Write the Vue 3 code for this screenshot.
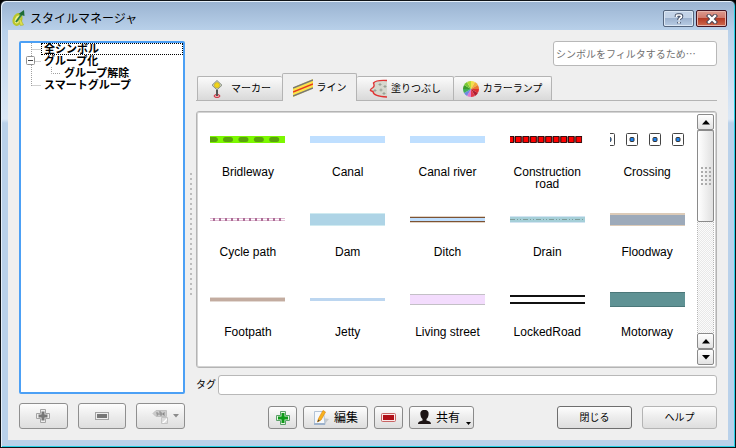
<script setup>
import { ref } from 'vue'

const filter = ref('')
const tag = ref('')
const activeTab = ref('line')

const tabs = [
  { id: 'marker', label: 'マーカー' },
  { id: 'line', label: 'ライン' },
  { id: 'fill', label: '塗りつぶし' },
  { id: 'ramp', label: 'カラーランプ' },
]

const symbols = [
  { name: 'Bridleway', bars: [{ y: 21, h: 7, fill: '#7cf800' }], kind: 'bridle' },
  { name: 'Canal', bars: [{ y: 21, h: 7, fill: '#bfdfff' }] },
  { name: 'Canal river', bars: [{ y: 21, h: 7, fill: '#bfdfff' }] },
  { name: 'Construction road', bars: [], kind: 'construction' },
  { name: 'Crossing', bars: [], kind: 'crossing' },
  { name: 'Cycle path', bars: [{ y: 23, h: 3, fill: '#e0bdd4' }, { y: 24, h: 1, fill: '#fff' }], kind: 'cycle' },
  { name: 'Dam', bars: [{ y: 18, h: 13, fill: '#cfeaf0' }, { y: 19, h: 11, fill: '#aed4e6' }] },
  { name: 'Ditch', bars: [{ y: 21, h: 7, fill: '#e3d3c4' }, { y: 22, h: 5, fill: '#7b5335' }, { y: 23, h: 3, fill: '#bfdfff' }] },
  { name: 'Drain', bars: [{ y: 21, h: 7, fill: '#d3e4f2' }, { y: 22, h: 5, fill: '#a5cfd8' }], kind: 'drain' },
  { name: 'Floodway', bars: [{ y: 18, h: 13, fill: '#dccbb8' }, { y: 20, h: 10, fill: '#9daaba' }] },
  { name: 'Footpath', bars: [{ y: 22, h: 5, fill: '#e4dad4' }, { y: 23, h: 3, fill: '#c3aca0' }] },
  { name: 'Jetty', bars: [{ y: 23, h: 3, fill: '#bcd6f0' }] },
  { name: 'Living street', bars: [{ y: 19, h: 11, fill: '#c3c0c6' }, { y: 20, h: 9, fill: '#f3dcfd' }] },
  { name: 'LockedRoad', bars: [{ y: 20, h: 9, fill: '#111' }, { y: 22, h: 5, fill: '#fff' }] },
  { name: 'Motorway', bars: [{ y: 17, h: 15, fill: '#4b7779' }, { y: 18, h: 13, fill: '#5f9294' }] },
]

const wheel = ['#f3e04a', '#f2b03a', '#e87830', '#e03030', '#b01c30', '#e03a4a', '#e07ad0', '#6f8be0', '#3fae5a', '#3c9c2c', '#78c832', '#b6d838']
const slices = wheel.map((fill, i) => {
  const p = (a) => `${(8 + 8 * Math.sin(a)).toFixed(2)} ${(8 - 8 * Math.cos(a)).toFixed(2)}`
  const s = Math.PI / 6
  return { fill, d: `M8 8L${p(i * s)}A8 8 0 0 1 ${p((i + 1) * s)}Z` }
})
</script>

<template>
  <div class="window">
    <header class="titlebar">
      <svg width="16" height="18" viewBox="0 0 16 18" aria-hidden="true">
        <ellipse cx="6.500" cy="10.500" rx="3.600" ry="5.400" transform="rotate(22 6.500 10.500)" fill="#eef08a" stroke="#b9c62a" stroke-width="2.400" />
        <path d="M7.500 11l2-1 3 6-3 .5z" fill="#dfe04a" stroke="#a4ae2a" stroke-width=".6" />
        <path d="M5 13L10.500 5.500" stroke="#2f7f45" stroke-width="2" />
        <path d="M7.500 5L13 1l.5 6-2.500-.8z" fill="#1d6b35" />
      </svg>
      <h1>スタイルマネージャ</h1>
      <div class="caption-buttons">
        <button class="caption" type="button" aria-label="ヘルプ">
          <svg width="10" height="12" viewBox="0 0 10 12"><path d="M2.500 4V3Q2.500 2 4 2H6Q7.500 2 7.500 3.500Q7.500 4.500 6 5.200Q5 5.700 5 7M5 9V10.500" fill="none" stroke="#47536a" stroke-width="3.600" /><path d="M2.500 4V3Q2.500 2 4 2H6Q7.500 2 7.500 3.500Q7.500 4.500 6 5.200Q5 5.700 5 7.500M5 8.700V10.500" fill="none" stroke="#fff" stroke-width="1.700" /></svg>
        </button>
        <button class="caption close" type="button" aria-label="ウィンドウを閉じる">
          <svg width="12" height="10" viewBox="0 0 12 10"><path d="M3 2L9 8M9 2L3 8" stroke="#4a4554" stroke-width="4.400" stroke-linecap="square" /><path d="M3 2L9 8M9 2L3 8" stroke="#fff" stroke-width="2.400" stroke-linecap="square" /></svg>
        </button>
      </div>
    </header>

    <main class="body">
      <section class="groups">
        <div class="tree" role="tree" aria-label="グループ">
          <svg class="branches" width="44" height="50" viewBox="0 0 44 50" aria-hidden="true">
            <path d="M10.500 0V43M10.500 6.500H20M10.500 18.500H20M30.500 24V30.500H40M10.500 42.500H20" fill="none" stroke="#a0a0a0" stroke-dasharray="1 1" />
            <rect x="5.500" y="13.500" width="8" height="8" rx="1" fill="#fff" stroke="#919191" />
            <path d="M7 17.500h5" stroke="#444" />
          </svg>
          <div class="node current" role="treeitem" tabindex="0">全シンボル</div>
          <div class="node" role="treeitem" aria-expanded="true">グループ化</div>
          <div class="node child" role="treeitem">グループ解除</div>
          <div class="node" role="treeitem">スマートグループ</div>
        </div>
        <div class="group-actions">
          <button class="btn tool" type="button" aria-label="グループを追加">
            <svg width="16" height="16" viewBox="0 0 16 16"><path d="M5.500 1.500h5v4h4v5h-4v4h-5v-4h-4v-5h4z" fill="#eee" stroke="#a2a2a2" stroke-linejoin="round" /><path d="M6.500 3.500h3v3h3v3h-3v3h-3v-3h-3v-3h3z" fill="#777" /></svg>
          </button>
          <button class="btn tool" type="button" aria-label="グループを削除">
            <svg width="16" height="16" viewBox="0 0 16 16"><rect x="1.500" y="4.500" width="13" height="7" fill="#eee" stroke="#a2a2a2" /><rect x="3" y="6" width="10" height="4" fill="#777" /></svg>
          </button>
          <button class="btn tool" type="button" aria-label="タグ付け">
            <svg class="abc" width="18" height="16" viewBox="0 0 18 16"><path d="M1 5.500L4 2.500H14.500V8.500H4z" fill="#ccc" stroke="#c0c0c0" /><path d="M4 5h2v2H4.500M8 3v4h2V5H8M13 5h-1.500v2H13" fill="none" stroke="#888" /><path d="M9.500 9.500h6v6h-6z" fill="#ddd" stroke="#c4c4c4" /><path d="M10 15l5-5v2l-3 3z" fill="#fff" /></svg>
            <svg width="6" height="4" viewBox="0 0 6 4"><path d="M0 0h6L3 3.500z" fill="#8b8b8b" /></svg>
          </button>
        </div>
      </section>

      <div class="splitter" aria-hidden="true"><span class="grip"></span></div>

      <section class="symbols">
        <input v-model="filter" class="field filter" type="text" aria-label="フィルタ" placeholder="シンボルをフィルタするため…" />

        <nav class="tabs" role="tablist">
          <button v-for="t in tabs" :key="t.id" type="button" role="tab" class="tab" :class="[t.id, { active: t.id === activeTab }]" :aria-selected="t.id === activeTab" @click="activeTab = t.id">
            <svg v-if="t.id === 'marker'" width="16" height="18" viewBox="0 0 16 18">
              <ellipse cx="8" cy="16" rx="3" ry="1.500" fill="#f3b0b0" stroke="#cc3344" />
              <path d="M8 9v7" stroke="#555" stroke-width="2" />
              <path d="M8 .5l5 4.700-5 4.700-5-4.700z" fill="#c5cbb5" stroke="#8d9488" />
              <circle cx="8" cy="5.200" r="2.600" fill="#f2d516" stroke="#c5ad24" stroke-width=".6" />
            </svg>
            <svg v-else-if="t.id === 'line'" width="20" height="18" viewBox="0 0 20 18">
              <path d="M0 8.500L20 0V9.500L0 18z" fill="#fbe34a" />
              <path d="M0 9L20 1M0 17L20 9" stroke="#777" stroke-width="1.600" />
              <path d="M0 13L20 5" stroke="#e63a1e" stroke-width="1.500" />
            </svg>
            <svg v-else-if="t.id === 'fill'" width="18" height="19" viewBox="0 0 18 19">
              <path d="M18 1.500C10 1 6 2 4.500 4C5 6 6 7 4 8.500C0 11 1 12 4 12.500C4 16 9 17.500 18 18" fill="#d5d8ce" stroke="#e03434" stroke-width="1.400" />
              <path d="M11 4v3M9.500 5.500h3M6 10v3M4.500 11.500h3M12 9.500v3M10.500 11h3M16 6v3M14.500 7.500h3M15 13v3M13.500 14.500h3" stroke="#9aa196" />
            </svg>
            <svg v-else width="16" height="16" viewBox="0 0 16 16">
              <path v-for="(s, i) in slices" :key="i" :d="s.d" :fill="s.fill" />
            </svg>
            <span>{{ t.label }}</span>
          </button>
        </nav>

        <div class="list">
          <ul class="grid">
            <li v-for="s in symbols" :key="s.name" class="item">
              <svg class="swatch" width="75" height="48" viewBox="0 0 75 48" aria-hidden="true">
                <rect v-for="(b, i) in s.bars" :key="i" x="0" :y="b.y" width="75" :height="b.h" :fill="b.fill" shape-rendering="crispEdges" />
                <g v-if="s.kind === 'bridle'" fill="#5aa30c">
                  <path d="M0 22h6q2 1 2 2.500t-2 2.500H0z" />
                  <rect v-for="i in 4" :key="i" :x="i * 15.4 - 2.4" y="22" width="10" height="5" rx="2.500" />
                </g>
                <g v-if="s.kind === 'construction'">
                  <path d="M0 24.500h71" stroke="#8b6666" stroke-width="6" />
                  <rect v-for="i in 10" :key="i" :x="i * 7.56 - 9.6" y="21.500" width="5.600" height="6" fill="#ff0000" stroke="#290808" stroke-width=".9" />
                </g>
                <g v-if="s.kind === 'crossing'">
                  <g v-for="i in 4" :key="i">
                    <rect :x="i * 23 - 29.5" y="18.500" width="11" height="12" rx="1" fill="#fff" stroke="#444" />
                    <rect :x="i * 23 - 26" y="22.500" width="4" height="4" rx="1" fill="#1f83ee" stroke="#333" />
                  </g>
                </g>
                <path v-if="s.kind === 'cycle'" d="M3 24.500H75" stroke="#ad6d96" stroke-width="3" stroke-dasharray="2 4" />
                <path v-if="s.kind === 'drain'" d="M0 24.500H75" stroke="#7f9d9a" stroke-dasharray="5 2 1 2 1 2" />
              </svg>
              <span class="name">{{ s.name }}</span>
            </li>
          </ul>
          <div class="scroll">
            <button class="arrow" type="button" aria-label="上へ"><svg width="8" height="5" viewBox="0 0 8 5"><path d="M4 0l4 4.500H0z" /></svg></button>
            <div class="track"><div class="thumb"><span class="dots"></span></div></div>
            <button class="arrow" type="button" aria-label="前へ"><svg width="8" height="5" viewBox="0 0 8 5"><path d="M4 0l4 4.500H0z" /></svg></button>
            <button class="arrow" type="button" aria-label="下へ"><svg width="8" height="5" viewBox="0 0 8 5"><path d="M0 0h8L4 4.500z" /></svg></button>
          </div>
        </div>

        <div class="tag-row">
          <label for="tag">タグ</label>
          <input id="tag" v-model="tag" class="field" type="text" />
        </div>

        <footer class="actions">
          <button class="btn icon" type="button" aria-label="追加">
            <svg width="16" height="16" viewBox="0 0 16 16"><path d="M5.500 1.500h5v4h4v5h-4v4h-5v-4h-4v-5h4z" fill="#e4f4e0" stroke="#5aa068" stroke-linejoin="round" /><path d="M6.500 3h3v3.500H13v3H9.500V13h-3V9.500H3v-3h3.500z" fill="#0d9a18" /></svg>
          </button>
          <button class="btn wide" type="button">
            <svg width="17" height="16" viewBox="0 0 17 16"><path d="M9 8l7 1-5 6z" fill="#c4c8cc" /><path d="M1.500 1.500h9l1.500 13h-10.500z" fill="#f6f9fc" stroke="#b3c3d6" /><path d="M1 13h11v2H1z" fill="#9db2cc" /><path d="M4.500 12l1-3.500L10 .5l2.500 1.500L8 10z" fill="#f7b21c" stroke="#e08a14" stroke-width=".7" /><path d="M4.500 12l.7-2.500 1.700 1z" fill="#443" /></svg>
            <span>編集</span>
          </button>
          <button class="btn icon" type="button" aria-label="削除">
            <svg width="16" height="16" viewBox="0 0 16 16"><rect x=".5" y="3.500" width="14" height="8" rx="1" fill="#fbe9e9" stroke="#c86464" /><rect x="2" y="5" width="11" height="5" fill="#b01018" /></svg>
          </button>
          <button class="btn wide share" type="button">
            <svg width="15" height="15" viewBox="0 0 15 15"><path d="M7.500 0C11 0 12 2 11.500 5C11.300 7 10.500 8 9.500 9V10.500C12 11 14 11.500 14 14H1C1 11.500 3.500 11 5.500 10.500V9C4.500 8 3.700 7 3.500 5C3 2 4 0 7.500 0z" fill="#1c1414" /></svg>
            <span>共有</span>
            <svg class="drop" width="5" height="3" viewBox="0 0 5 3"><path d="M0 0h5L2.500 3z" /></svg>
          </button>
          <button class="btn dialog default" type="button">閉じる</button>
          <button class="btn dialog" type="button">ヘルプ</button>
        </footer>
      </section>
    </main>
  </div>
</template>

<style>
body {
  margin: 0;
  background: #000;
}
</style>

<style scoped>
* {
  box-sizing: border-box;
}
svg {
  flex: none;
}
.window {
  display: flex;
  flex-direction: column;
  min-height: 100vh;
  padding: 0 7px 7px 6px;
  font: 10px/12px "Liberation Sans", "Noto Sans CJK JP", sans-serif;
  color: #000;
  background: linear-gradient(#9ab3d1 0, #b9d1ea 30px, #d2e2f3 90px, #dbe8f6 118px, #b9d1ea 122px);
  border: 1px solid #101418;
  border-radius: 6px 6px 0 0;
  box-shadow: inset 1px 1px 0 #e6f0fa, inset -1px -1px 0 #26d0e6;
}
button,
input {
  font: inherit;
  color: inherit;
}
.titlebar {
  display: flex;
  align-items: center;
  height: 29px;
  padding: 5px 1px 0 4px;
}
h1 {
  flex: 1;
  margin: 0 0 0 3px;
  font: 12px/18px "Noto Sans CJK JP", sans-serif;
}
.caption-buttons {
  display: flex;
  gap: 2px;
  align-self: flex-start;
  padding-top: 4px;
}
.caption {
  display: flex;
  align-items: center;
  justify-content: center;
  width: 31px;
  height: 17px;
  padding: 0;
  border: 1px solid #53647c;
  border-radius: 2px;
  background: linear-gradient(#c3d3e7 50%, #9db3cf 50%, #b8cce4);
  box-shadow: inset 0 0 0 1px #dbe7f4;
}
.caption.close {
  border-color: #431422;
  background: linear-gradient(#dc9a8e, #cf7668 50%, #b53a24 50%, #cf6a4e);
  box-shadow: inset 0 0 0 1px #e6b4aa;
}
.body {
  flex: 1;
  display: grid;
  grid-template-columns: 166px 11px minmax(0, 1fr);
  padding: 11px;
  margin-left: 1px;
  background: #efefef;
}
.groups,
.symbols {
  display: flex;
  flex-direction: column;
}
.groups {
  gap: 9px;
}
.tree {
  position: relative;
  flex: 1;
  background: #fff;
  border: 2px solid #4ca0f5;
  border-radius: 2px;
  font-size: 11px;
  font-weight: bold;
}
.branches {
  position: absolute;
  left: 0;
  top: 0;
}
.node {
  height: 12px;
  margin-left: 20px;
  padding-left: 3px;
}
.node.current {
  outline: 1px dotted #000;
  outline-offset: -1px;
}
.node.child {
  margin-left: 40px;
}
.group-actions {
  display: flex;
  gap: 10px;
}
.btn {
  display: flex;
  align-items: center;
  justify-content: center;
  height: 23px;
  padding: 0;
  border: 1px solid #b4b4b4;
  border-radius: 3px;
  background: linear-gradient(#fdfdfd, #ececec 50%, #dedede);
}
.btn.tool {
  flex: 1;
  height: 26px;
  gap: 3px;
  border-color: #8f8f8f;
}
.abc {
  margin-left: 10px;
}
.splitter {
  display: flex;
  align-items: center;
  justify-content: center;
}
.grip {
  width: 2px;
  height: 125px;
  background: linear-gradient(#bdbdbd 2px, transparent 2px) 0 0 / 5px 5px;
}
.field {
  min-width: 0;
  padding: 0 2px;
  background: #fff;
  border: 1px solid #b8b8b8;
  border-radius: 3px;
  outline: none;
}
.filter {
  align-self: flex-end;
  width: 164px;
  height: 25px;
  font-family: "Noto Sans CJK JP", sans-serif;
}
.filter::placeholder {
  color: #707070;
  opacity: 1;
}
.tabs {
  display: flex;
  align-items: flex-end;
  height: 28px;
  margin: 7px 0 10px;
  padding-left: 1px;
  border-bottom: 1px solid #b4b4b4;
}
.tab {
  display: flex;
  align-items: center;
  justify-content: center;
  gap: 4px;
  height: 24px;
  padding: 0 8px;
  border: 1px solid #b4b4b4;
  border-width: 1px 1px 0 0;
  border-radius: 2px 2px 0 0;
  background: linear-gradient(#fbfbfb, #d9d9d9);
  white-space: nowrap;
}
.tab.marker {
  width: 85px;
  gap: 6px;
  border-width: 1px 0 0 1px;
}
.tab.line {
  width: 75px;
}
.tab.fill {
  width: 97px;
}
.tab.ramp {
  width: 98px;
}
.tab.active {
  height: 28px;
  margin-bottom: -1px;
  border-width: 1px 1px 0;
  background: #efefef;
}
.list {
  flex: 1;
  display: flex;
  border: 1px solid #b4b4b4;
  border-radius: 3px;
  box-shadow: inset 0 0 0 1px #d4d4d4;
  background: #fff;
  padding: 2px 2px 2px 1px;
}
.grid {
  flex: 1;
  display: grid;
  grid-template-columns: repeat(auto-fill, minmax(96px, 1fr));
  grid-auto-rows: 80px;
  align-content: start;
  margin: 0;
  padding: 1px 0 0;
  list-style: none;
}
.item {
  display: flex;
  flex-direction: column;
  align-items: center;
  gap: 3px;
}
.name {
  width: 80px;
  text-align: center;
  font-size: 12px;
}
.scroll {
  display: flex;
  flex-direction: column;
  width: 17px;
}
.arrow {
  display: flex;
  align-items: center;
  justify-content: center;
  height: 16px;
  padding: 0;
  border: 1px solid #8a8a8a;
  border-radius: 2px;
  background: linear-gradient(#fff, #e2e2e2);
}
.track {
  flex: 1;
  border: 1px dotted #b5b5b5;
  border-width: 0 1px;
  background: conic-gradient(#e8e8e8 25%, #fbfbfb 0 50%, #e8e8e8 0 75%, #fbfbfb 0) 0 0 / 2px 2px;
}
.thumb {
  display: flex;
  align-items: center;
  justify-content: center;
  height: 92px;
  margin: 0 -1px;
  border: 1px solid #8a8a8a;
  border-radius: 2px;
  background: linear-gradient(90deg, #fff, #e0e0e0);
}
.dots {
  width: 12px;
  height: 20px;
  background: radial-gradient(circle, #ababab 1px, transparent 1px) 0 0 / 4px 4px;
}
.tag-row {
  display: flex;
  align-items: center;
  margin-top: 7px;
}
.tag-row label {
  width: 22px;
}
.tag-row .field {
  flex: 1;
  height: 20px;
}
.actions {
  display: flex;
  margin-top: 11px;
  padding-left: 72px;
  gap: 6px;
}
.actions .btn {
  border-color: #8a8a8a;
}
.btn.icon {
  width: 29px;
}
.btn.wide {
  width: 65px;
  gap: 4px;
  font-size: 12px;
}
.btn.share {
  position: relative;
  padding-right: 6px;
}
.drop {
  position: absolute;
  right: 2px;
  bottom: 3px;
}
.actions .dialog {
  width: 75px;
  border-color: #b4b4b4;
}
.actions .default {
  margin-left: auto;
  margin-right: 4px;
  border-color: #6e6e6e;
}
</style>
